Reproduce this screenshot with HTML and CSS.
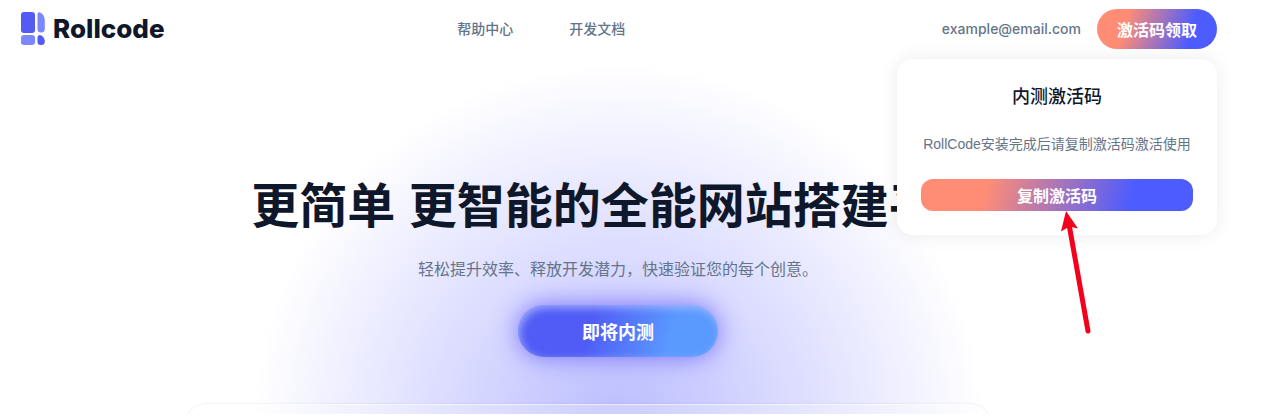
FILE: index.html
```html
<!DOCTYPE html>
<html lang="zh-CN">
<head>
<meta charset="utf-8">
<meta name="viewport" content="width=device-width, initial-scale=1">
<title>Rollcode</title>
<link rel="stylesheet" href="styles.css">
</head>
<body>
<div class="page">
  <header class="header">
    <a class="brand" href="#">
      <svg class="brand-mark" viewBox="0 0 24 34" aria-hidden="true">
        <rect x="0" y="0" width="14" height="21" rx="3" fill="#525cf5"/>
        <rect x="0" y="23" width="14" height="10" rx="3" fill="#7b86ff"/>
        <path d="M16.500 2.500Q16.500 0 18.500 .3Q23.800 2.500 23.800 9V17Q23.500 20.500 20 20.500Q16.500 20.500 16.500 17Z" fill="#7b86ff"/>
        <path d="M16.500 25.500Q16.500 23 19 23Q23.800 24.500 23.800 30Q23.500 33 20.500 33H19.500Q16.500 33 16.500 30Z" fill="#525cf5"/>
      </svg>
      <span class="brand-name">Rollcode</span>
    </a>
    <nav class="nav">
      <a href="#">帮助中心</a>
      <a href="#">开发文档</a>
    </nav>
    <div class="account">
      <span class="email">example@email.com</span>
      <button class="claim" type="button">激活码领取</button>
      <div class="popover" role="dialog" aria-labelledby="popover-title">
        <h2 class="popover-title" id="popover-title">内测激活码</h2>
        <p class="popover-text">RollCode安装完成后请复制激活码激活使用</p>
        <button class="copy" type="button">复制激活码</button>
        <svg class="arrow" viewBox="0 0 32 126" aria-hidden="true">
          <path d="M8.500 16L27 120" stroke="#f3001d" stroke-width="5" stroke-linecap="round"/>
          <path d="M5 0L17 17.500L8.500 15.500L0 20.500Z" fill="#f3001d"/>
        </svg>
      </div>
    </div>
  </header>
  <main class="hero">
    <h1 class="hero-title">更简单 更智能的全能网站搭建平台</h1>
    <p class="hero-text">轻松提升效率、释放开发潜力，快速验证您的每个创意。</p>
    <button class="cta" type="button">即将内测</button>
    <div class="preview"><div class="preview-frame"></div></div>
  </main>
</div>
</body>
</html>
```
FILE: styles.css
```css
* {
  box-sizing: border-box;
}

body {
  margin: 0;
  background: #fff;
  color: #0f172a;
  font-family: "Liberation Sans", "Noto Sans CJK SC", sans-serif;
}

h1,
h2,
p {
  margin: 0;
}

a {
  color: inherit;
  text-decoration: none;
}

button {
  border: 0;
  padding: 0;
  color: #fff;
  font-family: inherit;
  font-weight: 700;
  cursor: pointer;
}

.page {
  margin-right: 32px;
  background: radial-gradient(circle 366px at 50% 430px, #babcff, #fff);
}

.header {
  display: flex;
  align-items: center;
  justify-content: space-between;
  height: 58px;
  padding: 0 19px 0 21px;
}

.brand {
  display: flex;
  align-items: center;
  gap: 8px;
}

.brand-mark {
  width: 24px;
  height: 34px;
}

.brand-name {
  font: 800 26px/34px Inter, sans-serif;
}

.nav {
  display: flex;
  gap: 56px;
  margin-right: 24px;
  color: #64748b;
  font-size: 14px;
  font-weight: 500;
  line-height: 22px;
}

.account {
  position: relative;
  display: flex;
  align-items: center;
  gap: 16px;
}

.email {
  color: #64748b;
  font: 500 14px/20px Inter, sans-serif;
}

.claim,
.copy {
  background: linear-gradient(106deg, #ff8d75 24%, #4d5cff 77%);
  font-size: 16px;
}

.claim {
  width: 120px;
  height: 40px;
  border-radius: 20px;
}

.popover {
  position: absolute;
  top: 50px;
  right: 0;
  z-index: 1;
  display: flex;
  flex-direction: column;
  width: 320px;
  padding: 24px;
  border-radius: 16px;
  background: #fff;
  box-shadow: 0 0 20px rgba(0, 0, 0, 0.08);
  text-align: center;
}

.popover-title {
  font-size: 18px;
  font-weight: 500;
  line-height: 28px;
}

.popover-text {
  margin: 20px 0 22px;
  color: #64748b;
  font-size: 14px;
  line-height: 26px;
  white-space: nowrap;
}

.copy {
  height: 32px;
  border-radius: 12px;
}

.arrow {
  position: absolute;
  top: 152px;
  left: 164px;
  width: 32px;
  height: 126px;
  fill: none;
}

.hero {
  display: flex;
  flex-direction: column;
  align-items: center;
  padding-top: 113px;
}

.hero-title {
  font-size: 48px;
  font-weight: 700;
  line-height: 72px;
  white-space: nowrap;
}

.hero-text {
  margin-top: 15px;
  color: #64748b;
  font-size: 16px;
  line-height: 24px;
}

.cta {
  width: 200px;
  height: 52px;
  margin: 23px 0 39px;
  border-radius: 26px;
  background: linear-gradient(106deg, #505cf5 36%, #5a9aff 76%);
  box-shadow:
    0 0 24px rgba(92, 82, 246, 0.75),
    inset 2px 3px 8px rgba(180, 190, 255, 0.8);
  font-size: 18px;
}

.preview {
  width: 65%;
  height: 18px;
  margin-right: 60px;
  padding-top: 8px;
  overflow: hidden;
}

.preview-frame {
  height: 40px;
  border: 1px solid rgba(255, 255, 255, 0.6);
  border-radius: 24px;
  background: rgba(255, 255, 255, 0.25);
  box-shadow: 0 0 2px rgba(80, 80, 140, 0.2);
}
```
